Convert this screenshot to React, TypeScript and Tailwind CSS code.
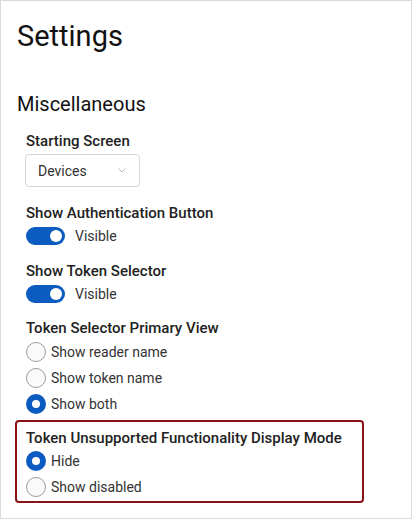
import React from "react";

function Toggle({ label }: { label: string }) {
  return (
    <div className="mt-[3px] h-[20px] flex items-center gap-[10px]">
      <div className="w-[39px] h-[18px] rounded-full bg-[#0b5bc0] flex items-center justify-end pr-[3px]">
        <div className="w-[12px] h-[12px] rounded-full bg-white" />
      </div>
      <span className="text-[14px] leading-[20px] text-[#333]">{label}</span>
    </div>
  );
}

function Radio({ label, checked }: { label: string; checked?: boolean }) {
  return (
    <div className="h-[26px] flex items-center gap-[5px]">
      <div
        className={
          checked
            ? "w-[20px] h-[20px] rounded-full border-[6px] border-[#0b5bc0] bg-white"
            : "w-[20px] h-[20px] rounded-full border border-[#9c9c9c] bg-[#fafafa]"
        }
      />
      <span className="text-[14px] leading-[20px] text-[#333]">{label}</span>
    </div>
  );
}

function Label({ children, className = "" }: { children: React.ReactNode; className?: string }) {
  return (
    <div className={`text-[15px] leading-[20px] font-medium text-[#222] ${className}`}>
      {children}
    </div>
  );
}

export default function App() {
  return (
    <div className="w-[412px] h-[519px] border border-[#dadada] bg-white pl-[16px] pt-[18px] font-['Roboto',sans-serif]">
      <h1 className="text-[29px] leading-[34px] text-[#111]">Settings</h1>
      <h2 className="mt-[38px] text-[20px] leading-[26px] text-[#111]">Miscellaneous</h2>

      <div className="ml-[9px]">
        <Label className="mt-[14px]">Starting Screen</Label>
        <div className="mt-[3px] -ml-px w-[115px] h-[33px] border border-[#d6d6d6] rounded-[4px] flex items-center justify-between pl-[12px] pr-[13px]">
          <span className="text-[14px] leading-[20px] text-[#333]">Devices</span>
          <svg width="8" height="5" viewBox="0 0 8 5" fill="none">
            <path d="M0.5 0.5L4 4L7.5 0.5" stroke="#b5b5b5" strokeWidth="1" />
          </svg>
        </div>

        <Label className="mt-[16px]">Show Authentication Button</Label>
        <Toggle label="Visible" />

        <Label className="mt-[15px]">Show Token Selector</Label>
        <Toggle label="Visible" />

        <Label className="mt-[14px]">Token Selector Primary View</Label>
        <div className="mt-[1px]">
          <Radio label="Show reader name" />
          <Radio label="Show token name" />
          <Radio label="Show both" checked />
        </div>
      </div>

      <div className="mt-[3px] -ml-[2px] w-[349px] border-2 border-[#8b1116] rounded-[4px] pl-[9px] pt-[6px] pb-[1px]">
        <Label>Token Unsupported Functionality Display Mode</Label>
        <Radio label="Hide" checked />
        <Radio label="Show disabled" />
      </div>
    </div>
  );
}
